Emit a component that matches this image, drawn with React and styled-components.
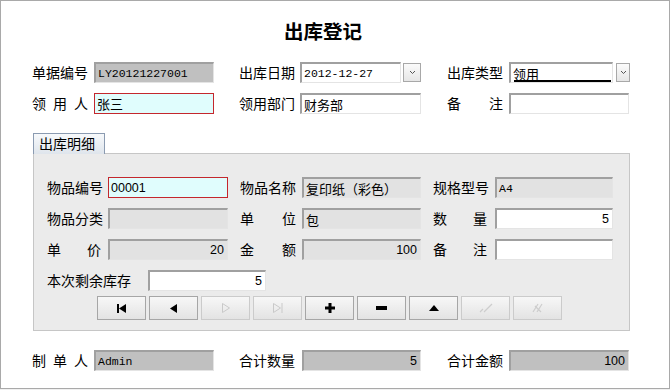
import React from 'react'
import styled, { createGlobalStyle } from 'styled-components'

const Global = createGlobalStyle`
  html, body { margin: 0; padding: 0; background: #f0f0f0; }
  body { font-family: "Noto Sans CJK SC", "Liberation Sans", sans-serif; color: #000; }
`

const Window = styled.div`
  width: 668px;
  height: 387px;
  background: #fff;
  border: 1px solid #a9a9a9;
  display: flex;
  flex-direction: column;
`

const Title = styled.h1`
  margin: 18px 0 0;
  height: 24px;
  line-height: 24px;
  font-size: 19.5px;
  font-weight: bold;
  text-align: center;
  padding-right: 24px;
`

const Grid = styled.div`
  display: grid;
  grid-template-columns: ${p => p.$cols};
  column-gap: ${p => p.$gap}px;
  row-gap: 10px;
  margin-top: ${p => p.$top || 0}px;
  padding-left: ${p => p.$left || 0}px;
`

const FieldRow = styled.div`
  display: flex;
  align-items: center;
  gap: ${p => p.$gap || 6}px;
  height: 21px;
`

const Label = styled.span`
  width: ${p => p.$w || 56}px;
  flex: none;
  font-size: 14px;
  line-height: 21px;
  white-space: nowrap;
  text-align: ${p => (p.$spread ? 'justify' : 'left')};
  text-align-last: ${p => (p.$spread ? 'justify' : 'auto')};
`

const fills = {
  gray: '#c0c0c0',
  soft: '#e2e2e2',
  white: '#ffffff',
  required: '#e0fdfd',
}

const Box = styled.div`
  box-sizing: border-box;
  width: ${p => p.$w || 120}px;
  height: 21px;
  flex: none;
  background: ${p => fills[p.$kind || 'white']};
  border: 1px solid;
  border-color: ${p =>
    p.$kind === 'required' ? '#c4272d' : '#a0a0a0 #e4e4e4 #e4e4e4 #a0a0a0'};
  ${p => (p.$kind === 'required' ? '' : 'border-width: 2px 1px 1px 2px;')}
  padding: 0 3px 0 2px;
  display: flex;
  align-items: center;
  justify-content: ${p => (p.$right ? 'flex-end' : 'flex-start')};
  font-family: ${p =>
    p.$mono ? '"Liberation Mono", monospace' : '"Noto Sans CJK SC", sans-serif'};
  font-size: ${p => (p.$mono ? '11.5px' : p.$num ? '12.5px' : '13px')};
  ${p => (p.$num ? 'font-family: "Liberation Sans", sans-serif;' : '')}
  white-space: nowrap;
  overflow: hidden;
  position: relative;
`

const Underline = styled.span`
  position: absolute;
  left: 3px;
  right: 1px;
  bottom: 0;
  height: 2px;
  background: #000;
`

const DropBtn = styled.div`
  box-sizing: border-box;
  width: ${p => p.$w}px;
  height: 19px;
  margin-left: ${p => p.$ml}px;
  border: 1px solid #a8a8a8;
  background: linear-gradient(#fbfbfb, #e6e6e6);
  display: flex;
  align-items: center;
  justify-content: center;
  flex: none;
`

const PanelWrap = styled.div`
  margin: 19px 0 0 32px;
  width: 597px;
`

const Tab = styled.div`
  box-sizing: border-box;
  width: 72px;
  height: 21px;
  border: 1px solid #8b9bb1;
  border-bottom: none;
  background: linear-gradient(#f7f9fb, #dfe5ec);
  font-size: 14px;
  line-height: 19px;
  padding-left: 5px;
  position: relative;
  z-index: 1;
  margin-bottom: -1px;
`

const Panel = styled.div`
  box-sizing: border-box;
  height: 178px;
  background: #ebebeb;
  border: 1px solid #c6c6c6;
  padding: 23px 0 0 13px;
  display: flex;
  flex-direction: column;
`

const NavBar = styled.div`
  display: flex;
  gap: 3px;
  margin: 5px 0 0 50px;
`

const NavButton = styled.button`
  box-sizing: border-box;
  width: 49px;
  height: 24px;
  padding: 0;
  border: 1px solid ${p => (p.disabled ? '#cbcbcb' : '#a6a6a6')};
  background: linear-gradient(#f7f7f7, #e3e3e3);
  display: flex;
  align-items: center;
  justify-content: center;
`

const Arrow = () => (
  <svg width="7" height="5" viewBox="0 0 7 5">
    <path d="M1 1 L3.5 3.5 L6 1" fill="none" stroke="#555" strokeWidth="1" />
  </svg>
)

const icons = {
  first: (
    <svg width="12" height="9" viewBox="0 0 12 9">
      <rect x="1" y="0" width="2" height="9" fill="#000" />
      <path d="M3 4.5 L10 0 L10 9 Z" fill="#000" />
    </svg>
  ),
  prior: (
    <svg width="10" height="9" viewBox="0 0 10 9">
      <path d="M1 4.5 L8 0 L8 9 Z" fill="#000" />
    </svg>
  ),
  next: (
    <svg width="10" height="10" viewBox="0 0 10 10">
      <path d="M1.5 0.5 L8.5 5 L1.5 9.5 Z" fill="none" stroke="#c9c9c9" />
    </svg>
  ),
  last: (
    <svg width="12" height="10" viewBox="0 0 12 10">
      <path d="M1.5 0.5 L8.5 5 L1.5 9.5 Z" fill="none" stroke="#c9c9c9" />
      <path d="M10 0 V10" stroke="#c9c9c9" />
    </svg>
  ),
  insert: (
    <svg width="10" height="10" viewBox="0 0 10 10">
      <path d="M5 0 V10 M0 5 H10" stroke="#000" strokeWidth="3" />
    </svg>
  ),
  remove: (
    <svg width="11" height="4" viewBox="0 0 11 4">
      <rect x="0" y="0" width="11" height="4" fill="#000" />
    </svg>
  ),
  edit: (
    <svg width="10" height="6" viewBox="0 0 10 6">
      <path d="M5 0 L10 6 L0 6 Z" fill="#000" />
    </svg>
  ),
  post: (
    <svg width="14" height="10" viewBox="0 0 14 10">
      <path d="M1 9 L4 6 M5 9 L13 1" fill="none" stroke="#cdcdcd" strokeWidth="1.2" />
    </svg>
  ),
  cancel: (
    <svg width="12" height="10" viewBox="0 0 12 10">
      <path d="M1 9 L6 1 M5 9 L10 1 M3 3 L9 9" fill="none" stroke="#cdcdcd" strokeWidth="1.2" />
    </svg>
  ),
}

const navItems = [
  ['first', false],
  ['prior', false],
  ['next', true],
  ['last', true],
  ['insert', false],
  ['remove', false],
  ['edit', false],
  ['post', true],
  ['cancel', true],
]

const Field = ({ label, spread, lw, gap, kind, w, right, mono, num, children }) => (
  <FieldRow $gap={gap}>
    <Label $spread={spread} $w={lw}>{label}</Label>
    <Box $kind={kind} $w={w} $right={right} $mono={mono} $num={num}>{children}</Box>
  </FieldRow>
)

export default function App() {
  return (
    <>
      <Global />
      <Window>
        <Title>出库登记</Title>

        <Grid $cols="181px 182px 182px" $gap={26} $top={19} $left={31}>
          <Field label="单据编号" kind="gray" mono>LY20121227001</Field>
          <FieldRow $gap={5}>
            <Label>出库日期</Label>
            <Box $w={101} $mono>2012-12-27</Box>
            <DropBtn $w={18} $ml={-3}><Arrow /></DropBtn>
          </FieldRow>
          <FieldRow>
            <Label>出库类型</Label>
            <Box $w={104}>领用<Underline /></Box>
            <DropBtn $w={14} $ml={-3}><Arrow /></DropBtn>
          </FieldRow>

          <Field label="领用人" spread kind="required">张三</Field>
          <Field label="领用部门" gap={5} w={121}>财务部</Field>
          <Field label="备注" spread>{''}</Field>
        </Grid>

        <PanelWrap>
          <Tab>出库明细</Tab>
          <Panel>
            <Grid $cols="181px 181px 181px" $gap={12}>
              <Field label="物品编号" lw={54} gap={7} kind="required" num>00001</Field>
              <Field label="物品名称" gap={6} w={119} kind="soft">复印纸（彩色）</Field>
              <Field label="规格型号" lw={54} gap={8} w={118} kind="soft" mono>A4</Field>

              <Field label="物品分类" lw={54} gap={7} kind="soft">{''}</Field>
              <Field label="单位" spread gap={6} w={119} kind="soft">包</Field>
              <Field label="数量" spread lw={54} gap={8} w={118} right num>5</Field>

              <Field label="单价" spread lw={54} gap={7} kind="soft" right num>20</Field>
              <Field label="金额" spread gap={6} w={119} kind="soft" right num>100</Field>
              <Field label="备注" spread lw={54} gap={8} w={118}>{''}</Field>
            </Grid>
            <Grid $cols="260px" $gap={0} $top={10}>
              <Field label="本次剩余库存" lw={84} gap={17} w={118} right num>5</Field>
            </Grid>
            <NavBar>
              {navItems.map(([name, disabled]) => (
                <NavButton key={name} disabled={disabled}>{icons[name]}</NavButton>
              ))}
            </NavBar>
          </Panel>
        </PanelWrap>

        <Grid $cols="181px 182px 182px" $gap={26} $top={19} $left={31}>
          <Field label="制单人" spread kind="gray" mono>Admin</Field>
          <Field label="合计数量" gap={7} w={119} kind="gray" right num>5</Field>
          <Field label="合计金额" kind="gray" right num>100</Field>
        </Grid>
      </Window>
    </>
  )
}
